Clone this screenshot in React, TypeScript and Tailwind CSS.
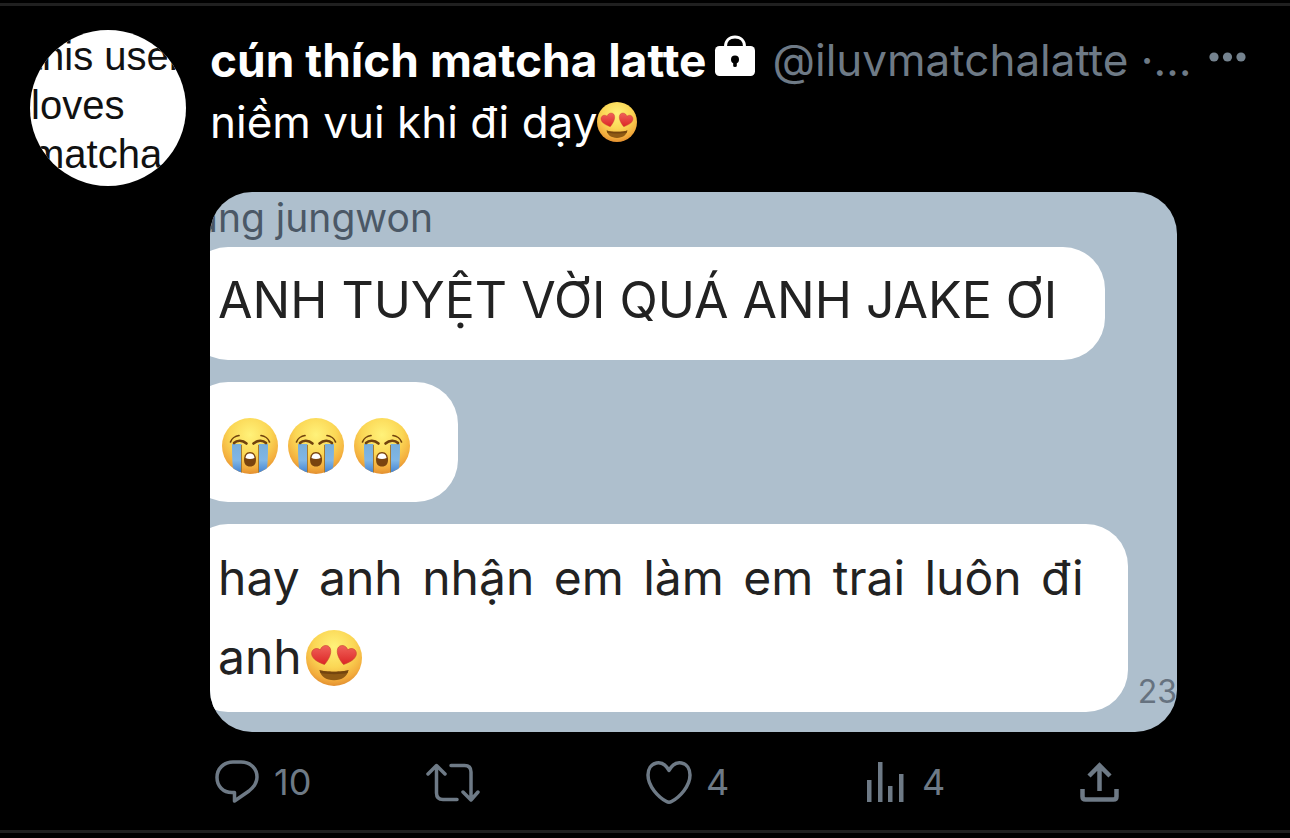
import type { ReactNode } from "react";

const messages = {
  sender: "ang jungwon",
  first: "ANH TUYỆT VỜI QUÁ ANH JAKE ƠI",
  last: "hay anh nhận em làm em trai luôn đi anh",
  time: "23",
};

function FaceGradient({ id }: { id: string }) {
  return (
    <radialGradient id={id} cx="50%" cy="30%" r="72%">
      <stop offset="0" stopColor="#fff27a" />
      <stop offset="0.5" stopColor="#fbd755" />
      <stop offset="0.82" stopColor="#f3ad3d" />
      <stop offset="1" stopColor="#e08a2e" />
    </radialGradient>
  );
}

function HeartEyes({ className }: { className: string }) {
  return (
    <svg viewBox="0 0 56 56" className={className} role="img" aria-label="heart eyes">
      <defs>
        <FaceGradient id="face-love" />
        <linearGradient id="love-heart" x1="0" y1="0" x2="0" y2="1">
          <stop offset="0" stopColor="#f0625a" />
          <stop offset="1" stopColor="#dc2626" />
        </linearGradient>
      </defs>
      <circle cx="28" cy="28" r="28" fill="url(#face-love)" />
      <path
        d="M18.500 34.500C12.500 32.500 7 29.500 5.800 25C4.500 19.500 10.500 16.500 14.300 20C15.500 14.800 22.500 13.800 24.300 18.500C26 23.500 22.500 30 18.500 34.500Z"
        fill="url(#love-heart)"
        stroke="#c8402c"
        strokeWidth="0.600"
      />
      <path
        d="M37.500 34.500C43.500 32.500 49 29.500 50.200 25C51.500 19.500 45.500 16.500 41.700 20C40.500 14.800 33.500 13.800 31.700 18.500C30 23.500 33.500 30 37.500 34.500Z"
        fill="url(#love-heart)"
        stroke="#c8402c"
        strokeWidth="0.600"
      />
      <path d="M13.500 40C19 42.300 37 42.300 42.500 40C41.500 46.500 36 50.300 28 50.300S14.500 46.500 13.500 40Z" fill="#8f5a14" />
      <path d="M13.500 40C19 42.300 37 42.300 42.500 40L41.500 43C36 44.500 20 44.500 14.500 43Z" fill="#74450e" />
    </svg>
  );
}

function Crying({ className }: { className: string }) {
  return (
    <svg viewBox="0 0 56 56" className={className} role="img" aria-label="loudly crying">
      <defs>
        <FaceGradient id="face-cry" />
        <linearGradient id="tear" x1="0" y1="0" x2="0" y2="1">
          <stop offset="0" stopColor="#79aed9" />
          <stop offset="0.55" stopColor="#7fb6e6" />
          <stop offset="1" stopColor="#3f7fd0" />
        </linearGradient>
        <clipPath id="face-clip">
          <circle cx="28" cy="28" r="28" />
        </clipPath>
      </defs>
      <circle cx="28" cy="28" r="28" fill="url(#face-cry)" />
      <g clipPath="url(#face-clip)">
        <path d="M10 26H19.500V56H12C10.500 50 10 40 10 26Z" fill="url(#tear)" />
        <path d="M36.500 26H46C46 40 45.500 50 44 56H36.500Z" fill="url(#tear)" />
        <path d="M19.500 27V56M36.500 27V56" stroke="#a87a2c" strokeWidth="1" />
      </g>
      <g fill="none" stroke="#70420d" strokeLinecap="round">
        <path d="M8.500 24C9.500 21 13 18 17 17.500" strokeWidth="1.700" />
        <path d="M47.500 24C46.500 21 43 18 39 17.500" strokeWidth="1.700" />
        <path d="M12 25C15 22 20.500 22 24.500 25.500" strokeWidth="2.600" />
        <path d="M44 25C41 22 35.500 22 31.500 25.500" strokeWidth="2.600" />
      </g>
      <path d="M28 34C32 34 34 37.500 34 41.500C34 46 32 48.500 28 48.500S22 46 22 41.500C22 37.500 24 34 28 34Z" fill="#7a440f" />
      <path d="M23.500 40C24 36.500 25.500 35.500 28 35.500S32 36.500 32.500 40C30 41.200 26 41.200 23.500 40Z" fill="#fff" />
    </svg>
  );
}

function LockIcon() {
  return (
    <svg viewBox="0 0 42 42" className="h-[42px] w-[42px] shrink-0" role="img" aria-label="protected account">
      <path d="M11.500 14V11.500C11.500 5.500 15.500 2 21 2S30.500 5.500 30.500 11.500V14" fill="none" stroke="#fff" strokeWidth="3" />
      <rect x="1" y="11" width="40" height="30" rx="4.500" fill="#fff" />
      <circle cx="21" cy="24.500" r="4" />
      <path d="M19.200 26H22.800V31Q22.800 32 21 32T19.200 31Z" />
    </svg>
  );
}

function Stroke({ children }: { children: ReactNode }) {
  return (
    <svg
      viewBox="0 0 54 48"
      className="h-12 w-[54px] shrink-0"
      fill="none"
      stroke="currentColor"
      strokeWidth="3.500"
      strokeLinecap="round"
      strokeLinejoin="round"
      aria-hidden="true"
    >
      {children}
    </svg>
  );
}

function Action({ label, count, children }: { label: string; count?: number; children: ReactNode }) {
  return (
    <button type="button" aria-label={label} className="flex items-center gap-2.5 text-left">
      {children}
      {count !== undefined && <span className="text-[36px] leading-12">{count}</span>}
    </button>
  );
}

function Bubble({ className, children }: { className: string; children: ReactNode }) {
  return <div className={`w-fit rounded-[42px] bg-white pl-8 leading-[79px] text-[#222] ${className}`}>{children}</div>;
}

export default function App() {
  return (
    <main className="min-h-screen overflow-hidden bg-black pt-[3px] font-['Inter',sans-serif] text-white">
      <article className="flex gap-6 border-y-[3px] border-[#202020] py-6 pl-[30px]">
        <div className="size-[156px] shrink-0 overflow-hidden rounded-full bg-white pt-0.5 pl-px font-['Liberation_Sans',sans-serif] text-[40px] leading-[49px] whitespace-nowrap text-[#111]">
          <p>this user</p>
          <p>loves</p>
          <p>matcha</p>
        </div>

        <div className="min-w-0 flex-1">
          <header className="flex items-center pr-11 leading-[60px]">
            <h1 className="text-[46px] font-bold whitespace-nowrap">cún thích matcha latte</h1>
            <span className="mb-2 ml-2">
              <LockIcon />
            </span>
            <p className="ml-4 min-w-0 text-[44px] whitespace-nowrap text-[#6e7a86]">@iluvmatchalatte ·…</p>
            <button type="button" aria-label="More" className="mb-1.5 ml-auto">
              <svg viewBox="0 0 37 10" className="h-2.5 w-[37px]" fill="#75838f">
                <circle cx="5" cy="5" r="4.600" />
                <circle cx="18.500" cy="5" r="4.600" />
                <circle cx="32" cy="5" r="4.600" />
              </svg>
            </button>
          </header>

          <p className="flex items-center text-[44px] leading-[64px]">
            niềm vui khi đi dạy
            <HeartEyes className="size-10" />
          </p>

          <div className="mt-[38px] mr-[113px] overflow-hidden rounded-[42px] bg-[#aebfcd] pb-5">
            <p className="-ml-3.5 h-[55px] text-[39px] leading-[52px] text-[#4b5866]">{messages.sender}</p>
            <Bubble className="-ml-6 pt-3.5 pr-12 pb-5 text-[50px] whitespace-nowrap">{messages.first}</Bubble>
            <Bubble className="mt-[22px] -ml-6 pr-12">
              <div className="flex h-[120px] items-center gap-2.5 pt-2 pl-1">
                <Crying className="size-14" />
                <Crying className="size-14" />
                <Crying className="size-14" />
              </div>
            </Bubble>
            <div className="mt-[22px] -ml-6 flex items-end gap-2.5">
              <Bubble className="max-w-[942px] pt-3.5 pr-11 pb-4 text-[48px]">
                <p className="text-justify">
                  {messages.last}
                  <HeartEyes className="mb-1.5 ml-1 inline-block size-14 align-middle" />
                </p>
              </Bubble>
              <time className="text-[32px] leading-[40px] text-[#66727f]">{messages.time}</time>
            </div>
          </div>

          <footer className="mt-[26px] mr-[113px] grid grid-cols-[21fr_21fr_21fr_21fr_10fr] text-[#6e7a86]">
            <Action label="Reply" count={10}>
              <Stroke>
                <path d="M23 4H31C41 4 47 11 47 19C47 25 44 29 39 33L24.500 43V34.500H22C13 34.500 7 28 7 19.500C7 10.500 14 4 23 4Z" />
              </Stroke>
            </Action>
            <Action label="Repost">
              <Stroke>
                <path d="M2 16L10.500 7.500L19 16M10.500 9V35Q10.500 41.500 17 41.500H31" />
                <path d="M25 7.500H38.500Q45 7.500 45 14V41M37 34L45 42L52 34" />
              </Stroke>
            </Action>
            <Action label="Like" count={4}>
              <Stroke>
                <path d="M27 12.500C24 7 19.500 4 14.500 5C9 6 6 11 6 17C6 28 16 39 24.500 43.500Q27 45 29.500 43.500C38 39 48 28 48 17C48 11 45 6 39.500 5C34.500 4 30 7 27 12.500Z" />
              </Stroke>
            </Action>
            <Action label="Views" count={4}>
              <svg viewBox="0 0 54 48" className="h-12 w-[54px] shrink-0" fill="currentColor" aria-hidden="true">
                <path d="M9 22H13.500V44H9ZM20 4H24.500V44H20ZM30 28H34.500V44H30ZM41 16H45.500V44H41Z" />
              </svg>
            </Action>
            <Action label="Share">
              <svg viewBox="0 0 54 48" className="h-12 w-[54px] shrink-0" fill="none" stroke="currentColor" strokeWidth="4.500" aria-hidden="true">
                <path d="M25.500 33V7M15 18L25.500 7.500L36 18" />
                <path d="M8.500 31V38.500Q8.500 41.500 11.500 41.500H39.500Q42.500 41.500 42.500 38.500V31" />
              </svg>
            </Action>
          </footer>
        </div>
      </article>
    </main>
  );
}
